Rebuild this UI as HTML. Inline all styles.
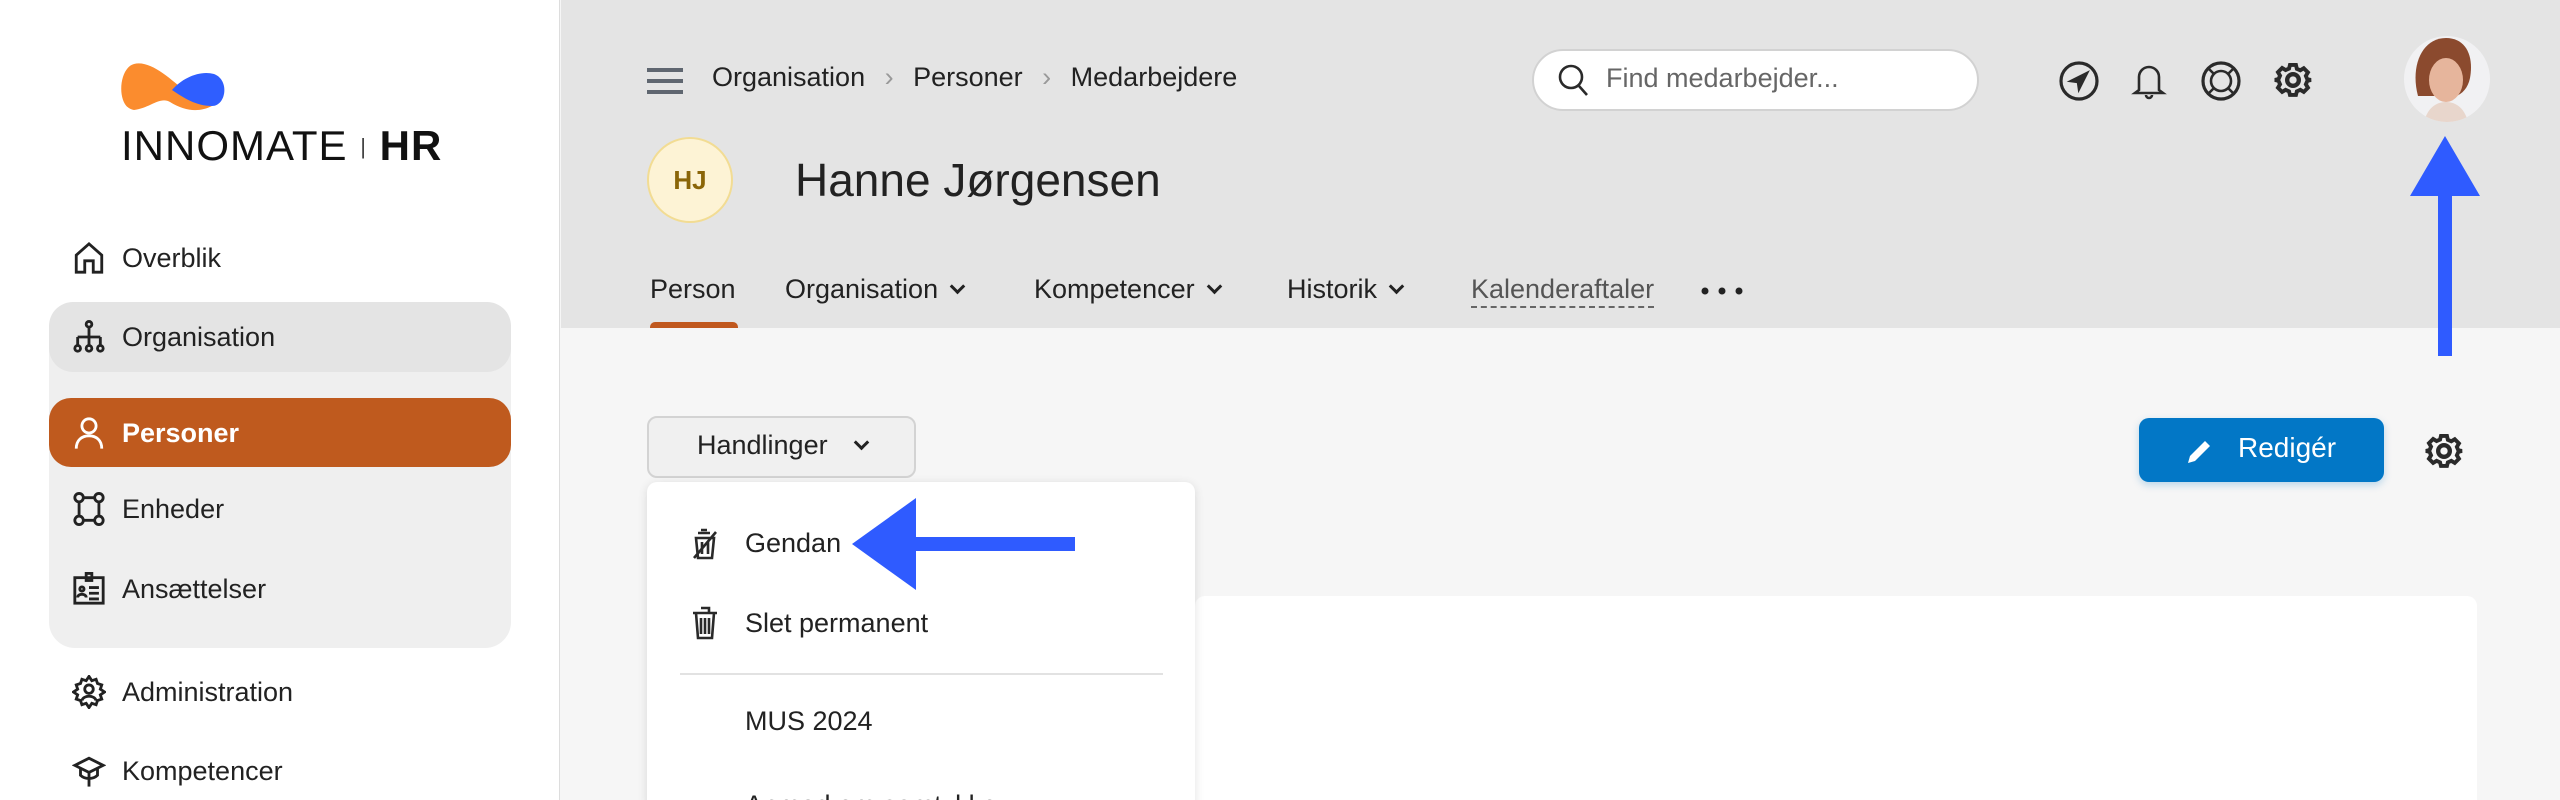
<!DOCTYPE html>
<html><head><meta charset="utf-8"><style>
*{margin:0;padding:0;box-sizing:border-box}
html,body{width:2560px;height:800px;overflow:hidden}
body{font-family:"Liberation Sans",sans-serif;color:#222;background:#f6f6f6;position:relative}
.abs{position:absolute}
#side{left:0;top:0;width:560px;height:800px;background:#fff;border-right:1px solid #ddd}
.nav{position:absolute;left:72px;font-size:27px;color:#222;display:flex;align-items:center;height:40px}
.nav svg{width:34px;height:34px;margin-right:16px;fill:none;stroke:#222;stroke-width:2}
#head{left:561px;top:0;width:1999px;height:328px;background:#e4e4e4}
.t{position:absolute;font-size:27px;color:#222;white-space:nowrap}
.chev{display:inline-block;width:11px;height:11px;border-right:3.5px solid #222;border-bottom:3.5px solid #222;transform:rotate(45deg);margin-left:14px;position:relative;top:-6px}
.ic{position:absolute;fill:none;stroke:#2a2a2a;stroke-width:2.6}
</style></head><body>
<div id="side" class="abs">
  <svg class="abs" style="left:120px;top:60px" width="110" height="54" viewBox="0 0 110 54">
    <path d="M14 4 C30 0 50 18 68 34 C76 40 84 44 92 46 C80 52 66 52 50 42 C40 36 30 48 14 50 C-4 48 -2 8 14 4Z" fill="#fb8c2e"/>
    <path d="M52 30 C62 18 80 10 94 14 C110 20 106 46 92 46 C76 46 64 38 52 30Z" fill="#2f5eff"/>
  </svg>
  <div class="abs" style="left:121px;top:122px;font-size:42px;letter-spacing:1px;white-space:nowrap;color:#111"><span style="font-weight:300">INNO</span>MATE <span style="font-size:22px;position:relative;top:-6px;color:#444">|</span> <b>HR</b></div>
  <div class="abs" style="left:49px;top:302px;width:462px;height:346px;background:#efefef;border-radius:26px"></div>
  <div class="abs" style="left:49px;top:302px;width:462px;height:70px;background:#e4e4e4;border-radius:24px"></div>
  <div class="abs" style="left:49px;top:398px;width:462px;height:69px;background:#bf5a1e;border-radius:22px"></div>
  <div class="nav" style="top:238px"><svg viewBox="0 0 24 24"><path d="M3 22V10L12 2l9 8v12h-6v-8H9v8z"/></svg>Overblik</div>
  <div class="nav" style="top:317px"><svg viewBox="0 0 24 24"><circle cx="12" cy="3" r="2"/><path d="M12 5v7M4 12h16M4 12v6M12 12v6M20 12v6"/><circle cx="4" cy="20" r="2"/><circle cx="12" cy="20" r="2"/><circle cx="20" cy="20" r="2"/></svg>Organisation</div>
  <div class="nav" style="top:413px;color:#fff;font-weight:bold"><svg viewBox="0 0 24 24" style="stroke:#fff"><circle cx="12" cy="7" r="5"/><path d="M3 23c0-6 4-9 9-9s9 3 9 9"/></svg>Personer</div>
  <div class="nav" style="top:489px"><svg viewBox="0 0 24 24"><circle cx="5" cy="4" r="3"/><circle cx="19" cy="4" r="3"/><circle cx="5" cy="20" r="3"/><circle cx="19" cy="20" r="3"/><path d="M5 7v10M19 7v10M8 4h8M8 20h8"/></svg>Enheder</div>
  <div class="nav" style="top:569px"><svg viewBox="0 0 24 24"><rect x="2" y="4" width="20" height="18"/><rect x="10" y="1" width="4" height="5"/><circle cx="7" cy="12" r="1.5"/><path d="M4 18c0-3 6-3 6 0M12 11h7M12 15h7M12 19h7"/></svg>Ansættelser</div>
  <div class="nav" style="top:672px"><svg viewBox="0 0 24 24"><path d="M12 1l2 3 3-1 1 3 3 1-1 3 3 2-3 2 1 3-3 1-1 3-3-1-2 3-2-3-3 1-1-3-3-1 1-3-3-2 3-2-1-3 3-1 1-3 3 1z"/><circle cx="12" cy="10" r="3"/><path d="M7 18c1-4 9-4 10 0"/></svg>Administration</div>
  <div class="nav" style="top:751px"><svg viewBox="0 0 24 24"><path d="M2 8l10-5 10 5-10 5z"/><path d="M6 10v5c3 3 9 3 12 0v-5"/><path d="M12 13v10"/></svg>Kompetencer</div>
</div>
<div id="head" class="abs"></div>
<svg class="abs" style="left:645px;top:66px" width="40" height="30"><path d="M2 4h36M2 15h36M2 26h36" stroke="#5f6670" stroke-width="4"/></svg>
<div class="t" style="left:712px;top:62px">Organisation <span style="color:#999;margin:0 12px">›</span> Personer <span style="color:#999;margin:0 12px">›</span> Medarbejdere</div>
<div class="abs" style="left:1532px;top:49px;width:447px;height:62px;background:#fff;border:2px solid #d2d2d2;border-radius:31px"></div>
<svg class="ic" style="left:1556px;top:62px" width="34" height="36" viewBox="0 0 34 36"><circle cx="15" cy="15" r="11"/><path d="M23 24l8 9"/></svg>
<div class="t" style="left:1606px;top:63px;color:#666">Find medarbejder...</div>
<svg class="ic" style="left:2058px;top:60px" width="42" height="42" viewBox="0 0 42 42"><circle cx="21" cy="21" r="18" stroke-width="3.2"/><path d="M29 13l-16 8 7 1 1 7z" fill="#2a2a2a"/></svg>
<svg class="ic" style="left:2130px;top:60px" width="38" height="42" viewBox="0 0 38 42"><path d="M9 30V17a10 10 0 0120 0v13l4 3H5z"/><path d="M16 35a3 3 0 006 0"/></svg>
<svg class="ic" style="left:2200px;top:60px" width="42" height="42" viewBox="0 0 42 42"><circle cx="21" cy="21" r="18" stroke-width="3.2"/><circle cx="21" cy="21" r="10"/><path d="M9 9l5 5M33 9l-5 5M9 33l5-5M33 33l-5-5"/></svg>
<svg class="ic" style="left:2273px;top:60px" width="40" height="40" viewBox="0 0 24 24" stroke-width="1.6"><path d="M10 2h4l.6 2.6 2.3 1 2.3-1.4 2.8 2.8-1.4 2.3 1 2.3L24 12v0l-2.4.6-1 2.3 1.4 2.3-2.8 2.8-2.3-1.4-2.3 1L14 22h-4l-.6-2.4-2.3-1-2.3 1.4L2 17.2l1.4-2.3-1-2.3L0 12l2.4-.6 1-2.3L2 6.8 4.8 4l2.3 1.4 2.3-1z" transform="scale(.9) translate(1.3 1.3)"/><circle cx="12" cy="12" r="3.5"/></svg>
<svg class="abs" style="left:2404px;top:36px" width="86" height="86" viewBox="0 0 86 86"><defs><clipPath id="c"><circle cx="43" cy="43" r="43"/></clipPath></defs><g clip-path="url(#c)"><rect width="86" height="86" fill="#f1f1f3"/><path d="M14 60C6 30 18 2 42 2c20 0 28 18 24 40-2 10-8 16-14 18z" fill="#8b4a2e"/><ellipse cx="42" cy="44" rx="17" ry="22" fill="#e6b59c"/><path d="M20 86c4-16 14-20 22-20s18 4 22 20z" fill="#e8d6cc"/></g></svg>
<div class="abs" style="left:647px;top:137px;width:86px;height:86px;border-radius:50%;background:#fdf3d5;border:2px solid #f2dc93;color:#8a6508;font-size:26px;font-weight:bold;display:flex;align-items:center;justify-content:center">HJ</div>
<div class="t" style="left:795px;top:153px;font-size:46px">Hanne Jørgensen</div>
<div class="t" style="left:650px;top:274px">Person</div>
<div class="abs" style="left:650px;top:322px;width:88px;height:6px;background:#c0581e;border-radius:5px 5px 0 0"></div>
<div class="t" style="left:785px;top:274px">Organisation<span class="chev"></span></div>
<div class="t" style="left:1034px;top:274px">Kompetencer<span class="chev"></span></div>
<div class="t" style="left:1287px;top:274px">Historik<span class="chev"></span></div>
<div class="t" style="left:1471px;top:274px;color:#555;border-bottom:2px dashed #666;padding-bottom:1px">Kalenderaftaler</div>
<svg class="abs" style="left:1700px;top:286px" width="44" height="10"><circle cx="5" cy="5" r="3.5" fill="#222"/><circle cx="22" cy="5" r="3.5" fill="#222"/><circle cx="39" cy="5" r="3.5" fill="#222"/></svg>
<div class="abs" style="left:647px;top:416px;width:269px;height:62px;background:#f0f0f0;border:2px solid #d3d3d3;border-radius:10px"></div>
<div class="t" style="left:697px;top:430px">Handlinger<span class="chev" style="margin-left:28px"></span></div>
<div class="abs" style="left:1195px;top:596px;width:1282px;height:220px;background:#fff;border-radius:10px"></div>
<div class="abs" style="left:647px;top:482px;width:548px;height:330px;background:#fff;border-radius:10px;box-shadow:0 2px 10px rgba(0,0,0,.12)"></div>
<svg class="ic" style="left:690px;top:528px" width="30" height="32" viewBox="0 0 30 32" stroke-width="2.4"><path d="M8 5h12M11 2h6M6 10h18l-2 20H8zM12 14v12M18 14v12M4 30L26 4"/></svg>
<div class="t" style="left:745px;top:528px">Gendan</div>
<svg class="ic" style="left:690px;top:606px" width="30" height="34" viewBox="0 0 30 34" stroke-width="2.6"><path d="M3 7h24M11 2h8v5M6 7l2 25h14l2-25M11 12v16M15 12v16M19 12v16"/></svg>
<div class="t" style="left:745px;top:608px">Slet permanent</div>
<div class="abs" style="left:680px;top:673px;width:483px;height:2px;background:#e2e2e2"></div>
<div class="t" style="left:745px;top:706px">MUS 2024</div>
<div class="t" style="left:745px;top:790px">Anmod om samtykke</div>
<svg class="abs" style="left:850px;top:496px" width="230" height="96"><path d="M2 48L66 2V41H225V55H66V94z" fill="#2f5bff"/></svg>
<svg class="abs" style="left:2410px;top:134px" width="72" height="224"><path d="M35 2L70 62H42V222H28V62H0z" fill="#2f5bff"/></svg>
<div class="abs" style="left:2139px;top:418px;width:245px;height:64px;background:#0277c6;border-radius:10px;box-shadow:0 3px 8px rgba(2,119,198,.25)"></div>
<svg class="abs" style="left:2184px;top:435px" width="32" height="32" viewBox="0 0 32 32"><path d="M4 28l2-7L21 6l5 5L11 26z" fill="#fff"/></svg>
<div class="t" style="left:2238px;top:432px;color:#fff;font-size:28px">Redigér</div>
<svg class="ic" style="left:2424px;top:431px" width="40" height="40" viewBox="0 0 24 24" stroke-width="1.6"><path d="M10 2h4l.6 2.6 2.3 1 2.3-1.4 2.8 2.8-1.4 2.3 1 2.3L24 12v0l-2.4.6-1 2.3 1.4 2.3-2.8 2.8-2.3-1.4-2.3 1L14 22h-4l-.6-2.4-2.3-1-2.3 1.4L2 17.2l1.4-2.3-1-2.3L0 12l2.4-.6 1-2.3L2 6.8 4.8 4l2.3 1.4 2.3-1z" transform="scale(.9) translate(1.3 1.3)"/><circle cx="12" cy="12" r="3.5"/></svg>
</body></html>
